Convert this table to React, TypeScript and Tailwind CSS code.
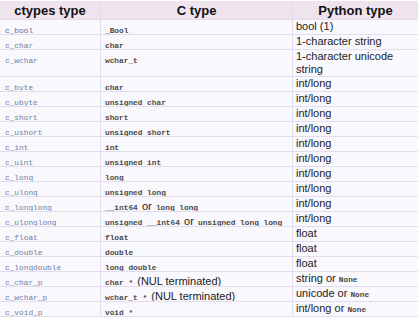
import React from "react";

const mono = "font-['Liberation_Mono','DejaVu_Sans_Mono',monospace]";
const sans = "font-['Liberation_Sans',Arial,sans-serif]";

type Row = { c: string; ct: React.ReactNode; py: React.ReactNode; tall?: boolean; link?: boolean };

const M = ({ children }: { children: React.ReactNode }) => (
  <span className={`${mono} text-[7.8px] font-bold text-[#4a4a4a] leading-none`}>{children}</span>
);
const S = ({ children }: { children: React.ReactNode }) => (
  <span className={`${sans} text-[11px] text-[#222] leading-none`}>{children}</span>
);

const rows: Row[] = [
  { c: "c_bool", ct: <M>_Bool</M>, py: "bool (1)", link: true },
  { c: "c_char", ct: <M>char</M>, py: "1-character string" },
  { c: "c_wchar", ct: <M>wchar_t</M>, py: <>1-character unicode<br />string</>, tall: true },
  { c: "c_byte", ct: <M>char</M>, py: "int/long" },
  { c: "c_ubyte", ct: <M>unsigned char</M>, py: "int/long" },
  { c: "c_short", ct: <M>short</M>, py: "int/long" },
  { c: "c_ushort", ct: <M>unsigned short</M>, py: "int/long" },
  { c: "c_int", ct: <M>int</M>, py: "int/long" },
  { c: "c_uint", ct: <M>unsigned int</M>, py: "int/long" },
  { c: "c_long", ct: <M>long</M>, py: "int/long" },
  { c: "c_ulong", ct: <M>unsigned long</M>, py: "int/long" },
  { c: "c_longlong", ct: <><M>__int64</M> <S>or</S> <M>long long</M></>, py: "int/long" },
  { c: "c_ulonglong", ct: <><M>unsigned __int64</M> <S>or</S> <M>unsigned long long</M></>, py: "int/long" },
  { c: "c_float", ct: <M>float</M>, py: "float" },
  { c: "c_double", ct: <M>double</M>, py: "float" },
  { c: "c_longdouble", ct: <M>long double</M>, py: "float" },
  { c: "c_char_p", ct: <><M>char *</M> <S>(NUL terminated)</S></>, py: <>string <S>or</S> <M>None</M></> },
  { c: "c_wchar_p", ct: <><M>wchar_t *</M> <S>(NUL terminated)</S></>, py: <>unicode <S>or</S> <M>None</M></> },
  { c: "c_void_p", ct: <M>void *</M>, py: <>int/long <S>or</S> <M>None</M></> },
];

export default function App() {
  return (
    <div className="w-[420px] h-[320px] bg-white pt-[1px] overflow-hidden">
      <div className="w-[418px] grid grid-cols-[101px_192px_125px]">
        <div className={`h-[19px] bg-[#efe3ee] border-b border-r border-[#e2dcee] flex items-center justify-center ${sans} text-[13px] font-bold text-[#111] leading-none`}>
          ctypes type
        </div>
        <div className={`h-[19px] bg-[#efe3ee] border-b border-r border-[#e2dcee] flex items-center justify-center ${sans} text-[13px] font-bold text-[#111] leading-none`}>
          C type
        </div>
        <div className={`h-[19px] bg-[#efe3ee] border-b border-[#e2dcee] flex items-center justify-center ${sans} text-[13px] font-bold text-[#111] leading-none`}>
          Python type
        </div>
        {rows.map((r) => {
          const h = r.tall ? "h-[27px]" : "h-[15px]";
          return (
            <React.Fragment key={r.c}>
              <div className={`${h} bg-[#f9f8fd] border-b border-r border-[#e2dcee] pl-[5px] pt-[1px] leading-[12px] overflow-hidden`}>
                <span
                  className={`${mono} text-[7.8px] ${
                    r.link ? "text-[#5a67a3] underline" : "text-[#7380a0]"
                  }`}
                >
                  {r.c}
                </span>
              </div>
              <div className={`${h} bg-[#f9f8fd] border-b border-r border-[#e2dcee] pl-[4px] pt-[1px] leading-[12px] whitespace-nowrap overflow-hidden`}>
                {r.ct}
              </div>
              <div className={`${h} bg-[#f9f8fd] border-b border-[#e2dcee] pl-[3px] pt-[0px] leading-[13px] ${sans} text-[11px] text-[#222] whitespace-nowrap overflow-hidden`}>
                {r.py}
              </div>
            </React.Fragment>
          );
        })}
      </div>
    </div>
  );
}
